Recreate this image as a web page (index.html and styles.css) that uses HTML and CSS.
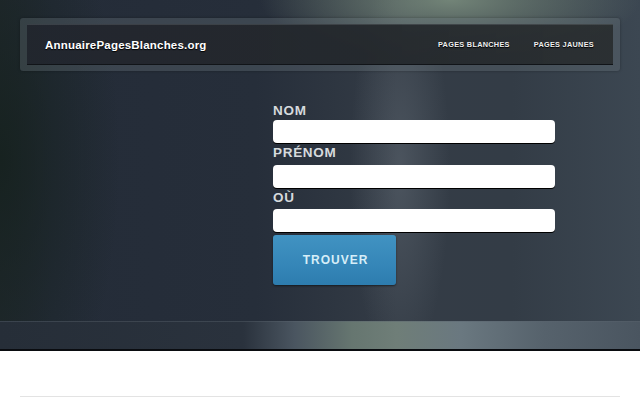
FILE: index.html
```html
<!DOCTYPE html>
<html lang="fr">
<head>
<meta charset="utf-8">
<title>AnnuairePagesBlanches.org</title>
<link rel="stylesheet" href="styles.css">
</head>
<body>
<header class="hero">
  <div class="nav">
    <div class="nav-inner">
      <a class="logo" href="#">AnnuairePagesBlanches.org</a>
      <nav class="links">
        <a href="#">PAGES BLANCHES</a>
        <a href="#">PAGES JAUNES</a>
      </nav>
    </div>
  </div>
  <form class="search">
    <label class="lbl">NOM</label>
    <input class="field" type="text">
    <label class="lbl">PRÉNOM</label>
    <input class="field" type="text">
    <label class="lbl">OÙ</label>
    <input class="field" type="text">
    <button class="btn" type="button">TROUVER</button>
  </form>
  <div class="band"></div>
</header>
<main class="below">
  <div class="rule"></div>
</main>
</body>
</html>
```
FILE: styles.css
```css
html, body {
  margin: 0;
  padding: 0;
  background: #ffffff;
  font-family: "Liberation Sans", Arial, sans-serif;
}
.hero {
  height: 351px;
  display: flex;
  flex-direction: column;
  box-sizing: border-box;
  padding-top: 18px;
  background:
    radial-gradient(ellipse 190px 60px at 450px 0px, rgba(130,150,132,0.8), rgba(130,150,132,0) 100%),
    radial-gradient(ellipse 50px 200px at 400px 170px, rgba(120,130,140,0.35), rgba(120,130,140,0) 100%),
    radial-gradient(ellipse 120px 300px at 0px 160px, rgba(20,32,28,0.8), rgba(20,32,28,0) 100%),
    linear-gradient(90deg, #222a30 0%, #242c38 8%, #262e3a 40%, #343c46 62%, #333c46 80%, #3c4752 100%);
}
.nav {
  margin: 0 20px;
  padding: 6px 7px 6px 7px;
  background: rgba(110,120,128,0.32);
  border-radius: 3px;
  box-shadow: 0 0 3px rgba(0,0,0,0.3);
}
.nav-inner {
  height: 39px;
  display: flex;
  align-items: center;
  justify-content: space-between;
  padding: 0 19px 0 18px;
  background: linear-gradient(90deg, rgba(32,36,44,0.92), rgba(34,38,42,0.92) 60%, rgba(40,44,46,0.9));
  border-bottom: 1px solid #111418;
  border-top: 1px solid rgba(160,170,175,0.2);
}
.logo {
  color: #ffffff;
  font-weight: bold;
  font-size: 11.5px;
  letter-spacing: 0.2px;
  text-decoration: none;
  text-shadow: 0 1px 1px #000;
}
.links {
  display: flex;
  gap: 24px;
}
.links a {
  color: #f0f0f0;
  font-weight: bold;
  font-size: 7.3px;
  letter-spacing: 0.3px;
  text-decoration: none;
  text-shadow: 0 1px 1px #000;
}
.search {
  margin: 32px 0 0 273px;
  width: 282px;
  display: flex;
  flex-direction: column;
}
.lbl {
  display: block;
  height: 21.5px;
  line-height: 20px;
  color: #d6dadd;
  font-weight: bold;
  font-size: 13.5px;
  letter-spacing: 0.7px;
}
.search .lbl:first-child {
  height: 17px;
  line-height: 15px;
}
.field {
  display: block;
  box-sizing: border-box;
  width: 282px;
  height: 23px;
  margin: 0;
  border: none;
  border-radius: 4px;
  background: #ffffff;
  box-shadow: 0 1px 0 #000;
}
.btn {
  margin-top: 3px;
  width: 123px;
  height: 50px;
  border: none;
  border-radius: 3px;
  background: linear-gradient(180deg, #4193c2 0%, #3586b8 60%, #2d7cae 100%);
  box-shadow: 0 1px 2px rgba(0,0,0,0.5);
  color: #d6eef8;
  font-family: "Liberation Sans", Arial, sans-serif;
  font-weight: bold;
  font-size: 12px;
  letter-spacing: 1px;
  padding: 0 0 0 2px;
}
.band {
  margin-top: auto;
  height: 27px;
  border-top: 1px solid rgba(90,100,110,0.4);
  border-bottom: 2px solid #0a0c10;
  background:
    linear-gradient(90deg, #262e38 0%, #2a323d 38%, #4a5560 46%, #667670 55%, #6f7e78 62%, #6a7880 72%, #56626c 85%, #4a5560 100%);
}
.below {
  height: 49px;
  display: flex;
  flex-direction: column;
  justify-content: flex-end;
}
.rule {
  margin: 0 20px 3px;
  height: 1px;
  background: #e3e3e3;
}
```
